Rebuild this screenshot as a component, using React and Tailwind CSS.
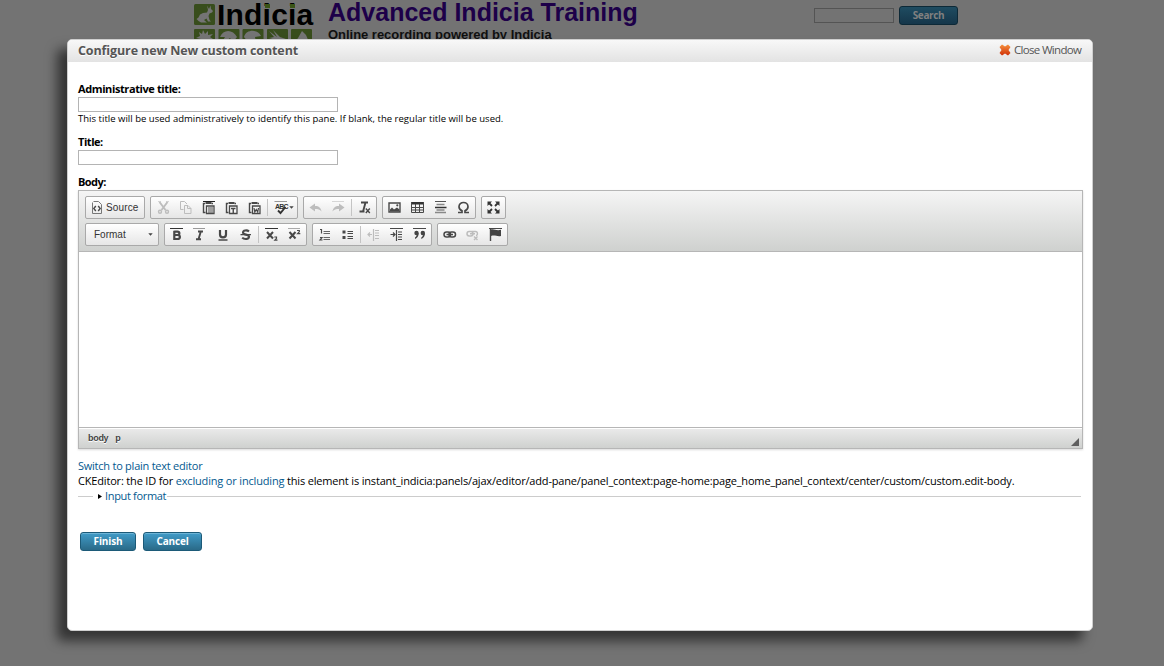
import React from "react";

const Svg = ({ w = 15, children, dim }) => (
  <svg width={w} height="15" viewBox={`0 0 ${w} 15`} fill="none" stroke={dim ? "#bdbdbd" : "#484848"} strokeWidth="1" className="block shrink-0">
    {children}
  </svg>
);

const Btn = ({ children }) => <button className="flex h-[21px] w-[23px] items-center justify-center">{children}</button>;
const Sep = () => <span className="mx-px h-[17px] w-px bg-[#c4c4c4]" />;
const Group = ({ children }) => (
  <div className="flex h-[23px] items-center rounded-[2px] border border-[#a9a9a9] bg-linear-to-b from-white to-[#e6e6e6]">{children}</div>
);

const Cut = () => (
  <Svg dim>
    <path d="M3 1.500H6M11 1.500H14" stroke="#d6d6d6" />
    <path d="M4.500 2L10.500 10M12.500 2L6.500 10" strokeWidth="1.900" />
    <circle cx="5" cy="11.700" r="1.500" strokeWidth="1.400" />
    <circle cx="12" cy="11.700" r="1.500" strokeWidth="1.400" />
  </Svg>
);
const Copy = () => (
  <Svg dim>
    <path d="M5.500 9.500H2.500V1.500H6.500L9 4" />
    <path d="M6.500 5.500H10L13 8.500V13.500H6.500ZM9.500 5.500V8.500H13" />
  </Svg>
);
const Paste = ({ children }) => (
  <Svg>
    <path d="M4.500 3H10.500" strokeWidth="2" />
    <path d="M4 3.500H2.500V12.500H4.500M10.500 3.500H12" strokeWidth="1.400" />
    <path d="M5.500 6H13V13.500H5.500Z" fill="#f7f7f7" strokeWidth="1.300" />
    {children}
  </Svg>
);
const Arrow = ({ flip }) => (
  <Svg dim>
    <g transform={flip ? "matrix(-1 0 0 1 15 0)" : undefined}>
      {flip && <path d="M2 1.500H14" stroke="#d6d6d6" />}
      <path d="M1.500 7.500L7 3.500V6C11 6 13 8 13.500 11.500C12 9.500 10 9 7 9V11.500Z" fill="#bdbdbd" stroke="none" />
    </g>
  </Svg>
);
const Caret = () => (
  <svg width="5" height="3" className="block shrink-0"><path d="M0.300 0.300H4.700L2.500 2.800Z" fill="#444" /></svg>
);

const Toolbar = () => (
  <div className="flex h-[61px] shrink-0 flex-col gap-[4px] border-b border-[#b6b6b6] bg-linear-to-b from-[#f5f5f5] to-[#cfd1cf] px-[6px] pt-[5px]">
    <div className="flex gap-[5px]">
      <Group>
        <button className="flex w-[58px] items-center gap-[2px] pl-[3px] font-['Liberation_Sans'] text-[10px] text-[#333]">
          <Svg>
            <path d="M4.500 1.500H9.500L12.500 4.500V13.500H3.500V2.500" stroke="#777" />
            <path d="M6.800 6L4.800 8.500L6.800 11M9.200 6L11.200 8.500L9.200 11" strokeWidth="1.400" />
          </Svg>
          <span className="tracking-[0.150px]">Source</span>
        </button>
      </Group>
      <Group>
        <Btn><Cut /></Btn>
        <Btn><Copy /></Btn>
        <Btn><Paste><path d="M2 1.500H14" stroke="#222" /><path d="M7 8H12M7 10H12M7 12H12" /></Paste></Btn>
        <Btn><Paste><path d="M7 8.500H11.500M9.250 8.500V13" strokeWidth="1.400" /></Paste></Btn>
        <Btn><Paste><path d="M7 8L7.800 12L9.250 9.500L10.700 12L11.500 8" strokeWidth="1.200" /></Paste></Btn>
        <Sep />
        <button className="flex h-[21px] w-[28px] items-center gap-px pl-[4px]">
          <span className="relative block h-[15px] w-[15px]">
            <span className="absolute top-[3px] left-[2px] font-['Liberation_Sans'] text-[7px] leading-[7px] font-bold tracking-[-0.800px] text-[#333]">ABC</span>
            <svg width="15" height="15" className="absolute top-0 left-0" fill="none">
              <path d="M1.500 1.500H14" stroke="#999" />
              <path d="M5 10.500L7.500 13L12.500 7" stroke="#333" strokeWidth="1.900" />
            </svg>
          </span>
          <Caret />
        </button>
      </Group>
      <Group>
        <Btn><Arrow /></Btn>
        <Btn><Arrow flip /></Btn>
        <Sep />
        <Btn>
          <Svg>
            <path d="M4 2.500H11M8.500 2.500L6.200 11M2.500 11.500H7.500" strokeWidth="1.900" />
            <path d="M8.800 8.500L12.800 13M12.800 8.500L8.800 13" strokeWidth="1.400" />
          </Svg>
        </Btn>
      </Group>
      <Group>
        <Btn>
          <Svg>
            <path d="M2 3H13V12H2Z" strokeWidth="1.400" />
            <path d="M3 11.500V9.500L5 7.500L7 9.500L10 7.500L12.500 9.500V11.500Z" fill="#484848" stroke="none" />
            <circle cx="10.300" cy="5.300" r="1.100" fill="#484848" stroke="none" />
          </Svg>
        </Btn>
        <Btn>
          <Svg>
            <path d="M1 2H14V4.500H1Z" fill="#333" stroke="none" />
            <path d="M1.500 2V12.500H13.500V2M5.500 4V12.500M9.500 4V12.500M1 7.500H14M1 10H14" />
          </Svg>
        </Btn>
        <Btn>
          <Svg><path d="M2 1.500H13" stroke="#555" /><path d="M3.500 4.500H11.500M3.500 10H11.500M2 12.500H13" stroke="#888" strokeWidth="1.500" /><path d="M2 7.500H13.500" stroke="#333" strokeWidth="1.600" /></Svg>
        </Btn>
        <Btn>
          <Svg><path d="M2 12.500H6V10.800C4 9.800 3 8.500 3 6.700C3 4.200 5 2.500 7.500 2.500C10 2.500 12 4.200 12 6.700C12 8.500 11 9.800 9 10.800V12.500H13" strokeWidth="1.700" /></Svg>
        </Btn>
      </Group>
      <Group>
        <Btn>
          <Svg>
            <path d="M3 3L6 6M12 3L9 6M3 12L6 9M12 12L9 9" stroke="#333" strokeWidth="1.800" />
            <path d="M1.500 1.500H6L1.500 6ZM13.500 1.500H9L13.500 6ZM1.500 13.500H6L1.500 9ZM13.500 13.500H9L13.500 9Z" fill="#333" stroke="none" />
          </Svg>
        </Btn>
      </Group>
    </div>
    <div className="flex gap-[5px]">
      <Group>
        <button className="flex w-[72px] items-center justify-between pr-[5px] pl-[8px] font-['Liberation_Sans'] text-[10px] text-[#333]">
          <span>Format</span>
          <Caret />
        </button>
      </Group>
      <Group>
        <Btn><Svg><path d="M1 1.500H14" stroke="#333" /><path d="M5.300 4.700H8.500C11 4.700 11 8 8.500 8H5.300M8.500 8C11.700 8 11.700 12 8.500 12H5.300M5.300 3.700V13" strokeWidth="2.200" /></Svg></Btn>
        <Btn><Svg><path d="M1 1.500H13" stroke="#999" /><path d="M6 4.500H11M8.800 4.500L6.500 12.200M4 12.200H9" strokeWidth="1.900" /></Svg></Btn>
        <Btn><Svg><path d="M5 3V7.500C5 11.300 11 11.300 11 7.500V3" strokeWidth="2.200" /><path d="M3.500 13H12.500" strokeWidth="1.300" /></Svg></Btn>
        <Btn><Svg><path d="M11 4.500C9 2.700 5 3.200 5 5.500C5 8.500 11 6.800 11 9.800C11 12.500 6 12.500 4.200 10.600" strokeWidth="2.100" /><path d="M2.500 7.700H13" strokeWidth="1.300" /></Svg></Btn>
        <Sep />
        <Btn><Svg><path d="M1 1.500H14" stroke="#333" /><path d="M3 5L9 11.500M9 5L3 11.500" strokeWidth="2" /><path d="M10.300 10H12.500V11.300L10.800 13.200H13.500" strokeWidth="1.200" /></Svg></Btn>
        <Btn><Svg><path d="M1 1.500H13" stroke="#aaa" /><path d="M2.500 5L8.500 11.500M8.500 5L2.500 11.500" strokeWidth="2" /><path d="M10 3.500H12.300V4.800L10.500 6.700H13.300" strokeWidth="1.200" /></Svg></Btn>
      </Group>
      <Group>
        <Btn><Svg><path d="M3 2.500H4.500V6.500M3 10.500H5L3 13H5.500" strokeWidth="1.200" /><path d="M6.500 4.500H13M6.500 6.500H13M6.500 10.500H13M6.500 12.500H13" stroke="#666" /></Svg></Btn>
        <Btn><Svg><path d="M2.500 5H5.500M2.500 10.500H5.500" strokeWidth="3" /><path d="M7.500 4.500H13M7.500 6.500H13M7.500 9.500H13M7.500 11.500H13" /></Svg></Btn>
        <Sep />
        <Btn><Svg dim><path d="M7.500 2V14M9 3.500H13M9 6H13M9 8.500H13M9 11.500H13M2 7.500H6M4 5.500L2 7.500L4 9.500" strokeWidth="1.200" /></Svg></Btn>
        <Btn><Svg><path d="M1 1.500H14" /><path d="M7.500 3V14M9 5H13M9 7.500H13M9 10H13M9 12.500H13M1.500 7.500H6M4 5.500L6 7.500L4 9.500" strokeWidth="1.200" /></Svg></Btn>
        <Btn><Svg><path d="M1 1.500H14" /><g fill="#444" stroke="none"><circle cx="4.500" cy="6" r="2.200" /><circle cx="10.800" cy="6" r="2.200" /><path d="M6.700 6C6.700 9 5.500 11 3 12V10.500C4.300 9.500 4.800 8.500 4.800 7ZM13 6C13 9 11.800 11 9.300 12V10.500C10.600 9.500 11.100 8.500 11.100 7Z" /></g></Svg></Btn>
      </Group>
      <Group>
        <Btn><Svg><rect x="2" y="5" width="6.500" height="5" rx="2.500" strokeWidth="1.500" /><rect x="7" y="5" width="6.500" height="5" rx="2.500" strokeWidth="1.500" /><path d="M4.500 7.500H11" strokeWidth="1.500" /></Svg></Btn>
        <Btn><Svg dim><rect x="2" y="4.500" width="6" height="4.500" rx="2.200" strokeWidth="1.500" /><path d="M6.500 4.500H10.500C13 4.500 13 8.500 11 8.500M5 6.750H10" strokeWidth="1.400" /><path d="M9 9.500L12.500 13M12.500 9.500L9 13" strokeWidth="1.400" /></Svg></Btn>
        <Btn><Svg><path d="M1 1.500H14" /><path d="M2.500 2V14" strokeWidth="1.400" /><path d="M3 2.500C6 1.500 8 4 13 2.800V9C9 10 7 7.500 3 9Z" fill="#444" stroke="none" /></Svg></Btn>
      </Group>
    </div>
  </div>
);

const DottedI = () => (
  <span className="relative">
    i<span className="absolute top-[6px] left-[2px] h-[4px] w-[5px] bg-[#3a5417]" />
  </span>
);

const Logo = () => (
  <div className="flex h-[50px] w-[120px] shrink-0 flex-col gap-[4px] pt-[4px]">
    <div className="flex h-[21px] shrink-0 items-center gap-[2px]">
      <svg width="21" height="21" viewBox="0 0 21 21" className="shrink-0">
        <rect width="21" height="21" rx="1.500" fill="#384d1c" />
        <path d="M13 1.500L15 5L16.500 1.500L17 5L19 7L18 8.500L15.500 9.500L14.500 12L15.500 16L17 17.500H14L12.500 14.500L10 16L13 18.500H7L4.500 17L2.500 15L4.500 13.500L6 10.500L9 9L13 8.500L14 6Z" fill="#747474" />
      </svg>
      <span className="font-['Liberation_Sans'] text-[30px] leading-[26px] font-bold tracking-[0.200px] text-black">
        Ind<DottedI />c<DottedI />a
      </span>
    </div>
    <svg width="120" height="21" viewBox="0 0 120 21" className="shrink-0">
      <g fill="#384d1c">
        <rect width="21" height="21" rx="1" /><rect x="24.500" width="21" height="21" rx="1" /><rect x="48.500" width="21" height="21" rx="1" />
        <rect x="73" width="21" height="21" rx="1" /><rect x="97" width="21" height="21" rx="1" />
      </g>
      <g fill="#747474">
        <path d="M5 3L8 5L9 1L11 5L14 2L14 6L19 5L16 8L19 10L13 13H8L7 10L2 9L6 7Z" />
        <path d="M26 8C29 0 39 0 43 8L39 13L36 9L31 13H28L31 8Z" />
        <path d="M50 8C52 0 64 0 67 7L61 8L62 13H54Z" />
        <path d="M75 2L83 8L79 1L86 8L92 10V13L82 11L75 9L80 8Z" />
        <path d="M108 2L112 6L115 13H101L104 9Z" />
      </g>
    </svg>
  </div>
);

const Action = ({ children, className }) => (
  <button className={"flex h-[19px] items-center justify-center rounded-[3px] border border-[#1c5a78] bg-linear-to-b from-[#419cc9] to-[#2a6a88] font-['Open_Sans'] text-[10px] font-bold tracking-[-0.150px] text-white shadow-[inset_0_1px_0_#6db4d6] " + className}>
    {children}
  </button>
);

export default function App() {
  return (
    <div className="flex h-[666px] w-[1164px] flex-col overflow-hidden bg-[#737373] font-['Open_Sans',sans-serif] text-[11px] text-black">
      <header className="flex h-[39px] shrink-0 items-start pl-[194px]">
        <Logo />
        <div className="ml-[14px] w-[486px] shrink-0 font-['Liberation_Sans'] font-bold whitespace-nowrap">
          <h1 className="h-[26px] text-[25px] leading-[25px] text-[#1d0049]">Advanced Indicia Training</h1>
          <p className="text-[13px] leading-[18px] tracking-[-0.030px] text-[#101010]">Online recording powered by Indicia</p>
        </div>
        <div className="mt-[8px] h-[15px] w-[80px] border border-[#545454]" />
        <button className="mt-[6px] ml-[5px] flex h-[19px] w-[59px] items-center justify-center rounded-[3px] border border-[#0d2937] bg-linear-to-b from-[#1f4c61] to-[#15364a] text-[10px] font-bold tracking-[-0.350px] text-[#808080]">
          Search
        </button>
      </header>

      <section className="relative ml-[67px] flex h-[592px] w-[1026px] shrink-0 flex-col overflow-hidden rounded-[5px] border border-[#cfcfcf] bg-white shadow-[-10px_10px_12px_0px_rgba(0,0,0,0.550)]">
        <div className="flex h-[22px] shrink-0 items-center justify-between bg-linear-to-b from-[#f8f8f8] to-[#e3e3e3] pr-[11px] pl-[10px] text-[#555]">
          <h2 className="text-[12.5px] leading-[20px] font-bold tracking-[-0.110px] text-shadow-[0_1px_0_#fff]">Configure new New custom content</h2>
          <a className="flex items-center gap-[3px] pb-[3px] text-[11.5px] leading-[18px]">
            <svg width="12" height="12" viewBox="0 0 12 12">
              <defs>
                <linearGradient id="cross" x1="0" y1="0" x2="0" y2="1"><stop offset="0" stopColor="#f5923e" /><stop offset="1" stopColor="#cf2e06" /></linearGradient>
              </defs>
              <path d="M3 .500L6 2.500L9 .500L11.500 3L9.500 6L11.500 9L9 11.500L6 9.500L3 11.500L.500 9L2.500 6L.500 3Z" fill="url(#cross)" />
            </svg>
            <span className="w-[67px] tracking-[-0.680px] whitespace-nowrap">Close Window</span>
          </a>
        </div>

        <div className="flex flex-col pr-[9px] pl-[10px]">
          <label className="mt-[19px] h-[16px] text-[11px] leading-[15px] font-bold tracking-[-0.400px]">Administrative title:</label>
          <div className="h-[15px] w-[260px] border border-[#b4b4b4]" />
          <p className="h-[14px] text-[9.5px] leading-[14px] tracking-[0.020px]">This title will be used administratively to identify this pane. If blank, the regular title will be used.</p>
          <label className="mt-[8px] h-[16px] text-[11px] leading-[15px] font-bold tracking-[-0.450px]">Title:</label>
          <div className="h-[15px] w-[260px] border border-[#b4b4b4]" />
          <label className="mt-[9px] h-[16px] text-[11px] leading-[15px] font-bold tracking-[-0.550px]">Body:</label>

          <div className="flex h-[259px] w-[1005px] flex-col border border-[#b6b6b6] shadow-[0_1px_2px_rgba(0,0,0,0.150)]">
            <Toolbar />
            <div className="flex-1 bg-white" />
            <div className="flex h-[21px] shrink-0 items-center justify-between border-t border-[#b6b6b6] bg-linear-to-b from-[#ebebeb] to-[#cfd1cf] pr-[3px] pl-[9px] font-['Liberation_Sans'] text-[9px] font-bold text-[#444] shadow-[inset_0_1px_0_#fff]">
              <div className="flex gap-[7px] pt-[2px] tracking-[-0.300px] text-shadow-[0_1px_0_#fff]"><span>body</span><span>p</span></div>
              <svg width="8" height="8" className="mt-[7px]"><path d="M8 0V8H0Z" fill="#5f5f5f" /></svg>
            </div>
          </div>

          <a className="mt-[9px] h-[15px] text-[11px] leading-[15px] tracking-[-0.240px] text-[#03598f]">Switch to plain text editor</a>
          <p className="h-[15px] text-[11px] leading-[15px] tracking-[-0.172px] whitespace-nowrap">
            CKEditor: the ID for <a className="text-[#03598f]">excluding or including</a> this element is instant_indicia:panels/ajax/editor/add-pane/panel_context:page-home:page_home_panel_context/center/custom/custom.edit-body.
          </p>
          <div className="flex h-[15px] w-[1003px] items-center leading-[15px] tracking-[-0.330px] text-[#03598f]">
            <span className="mt-px h-px w-[15px] bg-[#ccc]" />
            <svg width="4" height="5" className="mt-px mr-[3px] ml-[5px]"><path d="M0 0L4 2.500L0 5Z" fill="#000" /></svg>
            <span>Input format</span>
            <span className="mt-px ml-px h-px flex-1 bg-[#ccc]" />
          </div>

          <div className="mt-[29px] ml-[2px] flex gap-[7px]">
            <Action className="w-[56px]">Finish</Action>
            <Action className="w-[59px]">Cancel</Action>
          </div>
        </div>
      </section>
    </div>
  );
}
